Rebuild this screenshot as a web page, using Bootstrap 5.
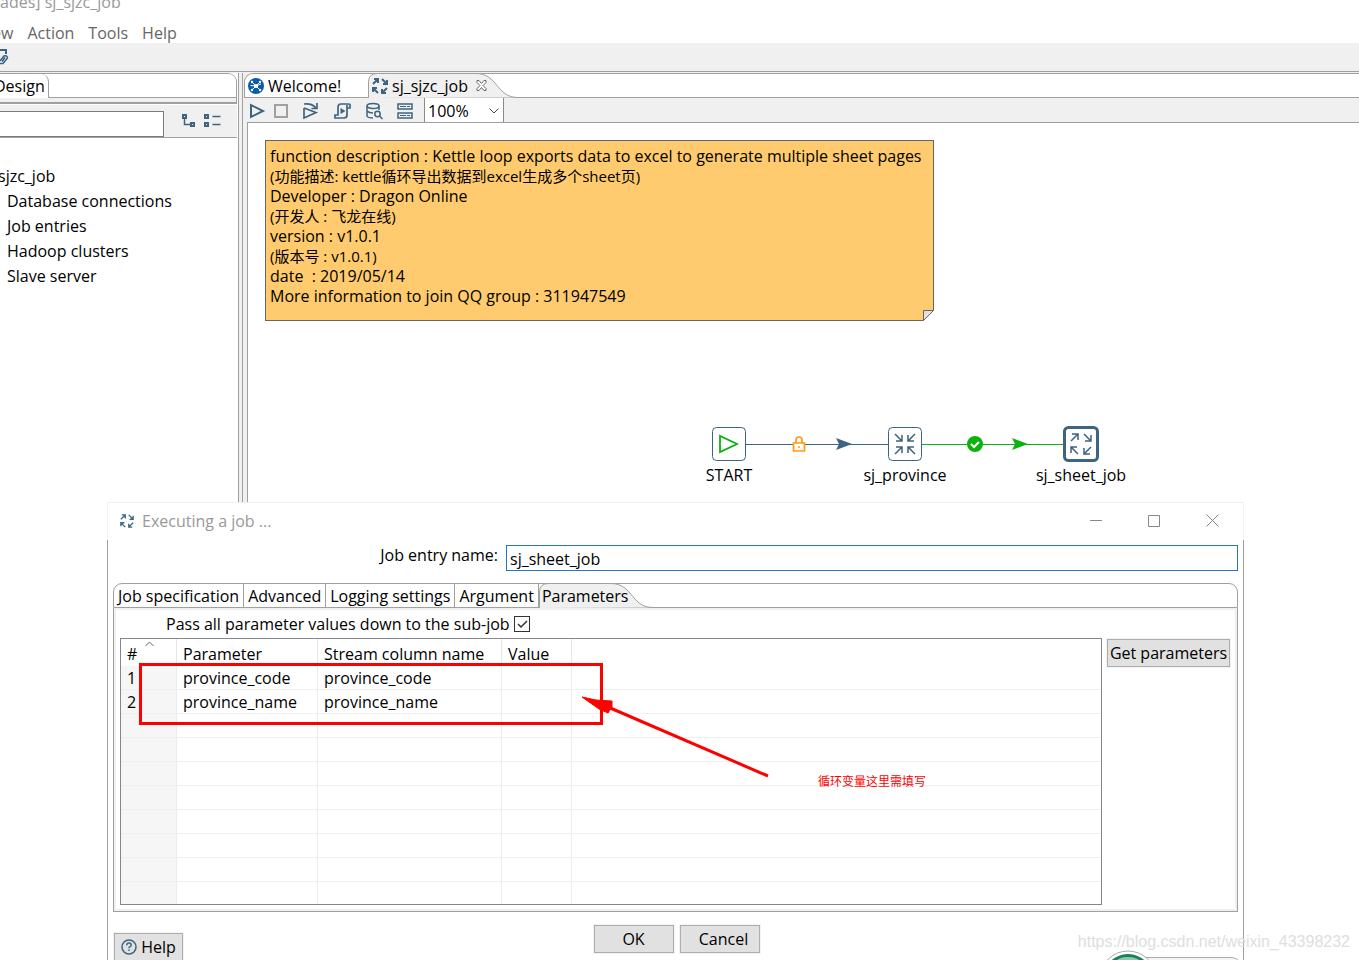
<!DOCTYPE html>
<html lang="en">
<head>
<meta charset="utf-8">
<meta name="viewport" content="width=device-width, initial-scale=1">
<title>sj_sjzc_job</title>
<link href="https://cdn.jsdelivr.net/npm/bootstrap@5.3.0/dist/css/bootstrap.min.css" rel="stylesheet">
<style>
:root { --edge: #a0a0a0; --panel: #f0f0f0; --ink: #3d6480; --go: #0cb310; }
body { font: 16px/20px "Open Sans", "Noto Sans CJK SC", sans-serif; color: #000; background: #fff; }
svg { display: block; flex: none; }
.ink { stroke: var(--ink); fill: none; stroke-width: 2; }
.title-row { height: 22px; color: #999; }
.title-row span { margin: -8px 0 0 -4px; }
.menu-row { height: 21px; color: #666; gap: 14px; }
.menu-row a { color: inherit; text-decoration: none; }
.menu-row a:first-child { margin-left: -8px; }
.tool-row { height: 28px; background: var(--panel); }
.split { background: var(--panel); border-top: 1px solid var(--edge); padding-top: 1px; gap: 3px; }
.side { width: 239px; border-right: 1px solid var(--edge); background: #fff; }
.work { border-left: 1px solid var(--edge); padding-left: 1px; }
.side-tabs { height: 31px; margin-right: 1px; border: solid var(--edge); border-width: 1px 1px 2px 0; border-top-right-radius: 9px; background: var(--panel); overflow: hidden; }
.side-tabs > div { height: 24px; background: #fff; border-bottom: 1px solid var(--edge); }
.side-tabs button { height: 24px; border: 0; border-right: 1px solid var(--edge); border-top-right-radius: 8px; background: #fff; padding: 0 3px 0 0; margin-left: -6px; }
.finder { height: 33px; margin: 1px 1px 0 0; background: var(--panel); border-bottom: 1px solid var(--edge); }
.finder input { width: 164px; height: 26px; margin-top: 6px; border: 1px solid #7a7a7a; border-left: 0; background: #fff; }
.tree { padding: 26px 0 0; line-height: 25px; }
.tree > div { margin-left: -2px; }
.tree ul { padding-left: 7px; }
.strip { height: 25px; background: #fff; border: 1px solid var(--edge); border-right: 0; border-radius: 9px 0 0 0; }
.strip button, .plain { border: 0; background: none; padding: 0; color: inherit; }
.strip .on { position: relative; height: 25px; margin-top: -1px; white-space: nowrap; }
.strip .on > * { position: relative; }
.strip .on > .curve { position: absolute; left: 0; top: 0; }
.welcome { width: 123px; }
.canvas-bar { height: 24px; background: var(--panel); padding-left: 5px; }
.canvas-bar > .plain { padding-top: 2px; }
.gap-tool { margin-left: 14px; }
.zoomer { width: 80px; height: 24px; margin-left: 11px; border: 1px solid #8a8a8a; border-width: 0 1px; background: #fff; }
.zoomer select { appearance: none; border: 0; background: none; width: 78px; height: 24px; padding: 1px 0 0 3px; line-height: 20px; }
.zoomer svg { position: absolute; right: 4px; top: 10px; pointer-events: none; }
.stage { margin-left: 3px; border: solid var(--edge); border-width: 1px 0 0 1px; background: #fff; }
.frame { background: var(--panel); }
.memo { position: absolute; left: 17px; top: 17px; width: 669px; height: 181px; padding: 5px 4px; background: #ffcb6e; border: 1px solid #666; }
.memo p { margin: 0; height: 20px; white-space: pre; }
.memo p:lang(zh) { font-size: 15px; }
.memo svg { position: absolute; right: -1px; bottom: -1px; }
.node { position: absolute; top: 303px; width: 122px; text-align: center; }
.node svg { margin: 0 auto 3px; }
.wire { position: absolute; top: 310px; left: 498px; }
.dialog-win { position: absolute; left: 107px; right: 115px; top: 502px; bottom: 0; background: #fff; overflow: hidden; }
.dlg-title { height: 38px; padding: 0 24px 2px 12px; color: #999; background: #fff; border: 1px solid var(--panel); border-bottom: 0; }
.knobs { gap: 46px; }
.dlg-body { border: solid var(--edge); border-width: 0 1px; padding: 5px 5px 0; flex: 1 0 auto; }
.name-row { gap: 8px; }
.name-row label { width: 385px; text-align: right; }
.name-row input { height: 26px; border: 1px solid #2675bf; padding: 1px 3px 0; min-width: 0; outline: 0; }
.book { margin-top: 12px; }
.book .strip { border-right: 1px solid var(--edge); border-radius: 9px 9px 0 0; }
.book .strip button:not(.on) { border-right: 1px solid var(--edge); padding: 1px 4px 0; white-space: nowrap; }
.book .strip button:not(.on) + button:not(.on) { border-top-left-radius: 8px; }
.sheet { border: 1px solid var(--edge); border-top: 0; }
.sheet-in { border: 2px solid var(--panel); padding: 5px 5px 4px 4px; }
.pass { padding-left: 46px; gap: 4px; height: 23px; }
.pass label { margin-top: -1px; }
.pass input { appearance: none; width: 16px; height: 16px; border: 1px solid #333; margin: 1px 0 0; background: #fff; }
.pass svg { position: absolute; left: 3px; top: 5px; pointer-events: none; }
.gridbox { height: 267px; overflow: hidden; border: 1px solid #828790; min-width: 0; }
.ptable { width: 100%; table-layout: fixed; border-collapse: separate; border-spacing: 0; }
.ptable th { font-weight: 400; height: 27px; padding: 2px 0 0 6px; border-right: 1px solid #e5e5e5; }
.ptable td { height: 24px; padding: 0 0 0 6px; border: solid #e8edf5; border-width: 0 1px 1px 0; border-bottom-color: #f0f0f0; }
.ptable tr > :last-child { border-right: 0; }
.ptable td:first-child { background: #f6f6f6; }
.sorter { position: absolute; left: 24px; top: 2px; }
.marker { position: absolute; left: 18px; top: 24px; width: 464px; height: 62px; border: 3px solid #f00; }
.arrow { position: absolute; left: 460px; top: 55px; }
.hint { position: absolute; left: 697px; top: 133px; font-size: 12px; color: #f00; }
.push { height: 28px; border: 1px solid #adadad; background: #e1e1e1; padding: 0; color: #000; white-space: nowrap; flex: none; box-shadow: 0 0 0 1px #f3f3f3; }
.get { width: 123px; margin: 1px 0 0 5px; }
.foot { padding: 13px 0 0 2px; gap: 6px; }
.w80 { width: 80px; }
.helper { left: 1px; top: 21px; width: 69px; }
.watermark { position: absolute; right: 9px; bottom: 8px; font: 16px/20px "Liberation Sans", sans-serif; color: #dedede; text-decoration: none; }
.ime { position: absolute; right: 118px; bottom: 0; }
</style>
</head>
<body>
<div class="vh-100 d-flex flex-column position-relative overflow-hidden">
  <header>
    <div class="title-row d-flex overflow-hidden"><span>lades] sj_sjzc_job</span></div>
    <nav class="menu-row d-flex align-items-center"><a href="#">ew</a><a href="#">Action</a><a href="#">Tools</a><a href="#">Help</a></nav>
    <div class="tool-row d-flex align-items-center">
      <button class="plain" aria-label="Edit"><svg width="10" height="18" viewBox="0 0 10 18"><path class="ink" d="M0 2h6v4"/><path class="ink" style="stroke-width:1.500" d="M0 13l4-5q3-1 3.500 2L3 15.500H0M2 13.500l3-4"/></svg></button>
    </div>
  </header>
  <div class="split d-flex flex-grow-1">
    <aside class="side flex-shrink-0">
      <div class="side-tabs"><div><button>Design</button></div></div>
      <div class="finder d-flex">
        <input type="text" aria-label="Search">
        <button class="plain ms-3" aria-label="Expand all"><svg width="16" height="16" viewBox="0 0 16 16"><path class="ink" d="M3 2h3v3H3zM11 10h3v3h-3z"/><path class="ink" style="stroke-width:1.500" d="M4.500 6v5.500H10"/></svg></button>
        <button class="plain ms-2" aria-label="Collapse all"><svg width="18" height="16" viewBox="0 0 18 16"><path class="ink" d="M1 2h3v3H1zM1 10h3v3H1z"/><path class="ink" style="stroke-width:1.500" d="M8.500 3.500h8M8.500 11.500h8"/></svg></button>
      </div>
      <div class="tree"><div>sjzc_job</div>
        <ul class="list-unstyled mb-0"><li>Database connections</li><li>Job entries</li><li>Hadoop clusters</li><li>Slave server</li></ul>
      </div>
    </aside>
    <main class="work flex-grow-1">
      <div class="strip d-flex">
        <button class="welcome d-flex align-items-center gap-1 ps-1"><svg style="margin-left:-1px" width="16" height="16" viewBox="0 0 16 16"><circle cx="8" cy="8" r="8" fill="#0a5ca8"/><path d="M4 4l8 8M12 4l-8 8M2.500 7.500L8 8l5-2" stroke="#fff"/><circle cx="8" cy="8" r="2" fill="#fff"/><g fill="#fff"><circle cx="4" cy="4" r="1.200"/><circle cx="12" cy="4" r="1.200"/><circle cx="4" cy="12" r="1.200"/><circle cx="12" cy="12" r="1.200"/></g></svg>Welcome!</button>
        <button class="on d-flex align-items-center gap-1 ps-1">
          <svg class="curve" width="154" height="25"><path d="M.5 25V9Q.5.5 9.500.5H108C130 .5 128 24.500 150 24.500" fill="#f0f0f0" stroke="#a0a0a0"/></svg>
          <svg width="16" height="16" viewBox="0 0 16 16"><path class="ink" d="M1 6l5-5M2 1h4v4M10 1l5 5M15 2v4h-4M15 10l-5 5M14 15h-4v-4M6 15l-5-5M1 14v-4h4"/></svg><span>sj_sjzc_job</span>
          <svg class="ms-1" width="11" height="11" viewBox="0 0 11 11"><path d="M1 .5h2l2.500 3 2.500-3h2v2l-3 3 3 3v2H8l-2.500-3-2.500 3H1v-2l3-3-3-3z" fill="#fff" stroke="#666"/></svg>
        </button>
      </div>
      <div class="frame">
        <div class="canvas-bar d-flex align-items-center">
          <button class="plain" aria-label="Run"><svg width="18" height="18" viewBox="0 0 18 18"><path class="ink" d="M2 3v12l12-6z"/></svg></button>
          <button class="plain" style="margin-left:7px" aria-label="Stop"><svg width="14" height="14" viewBox="0 0 14 14"><path d="M1 1h12v12H1z" fill="none" stroke="#a0a0a0" stroke-width="2"/></svg></button>
          <button class="plain gap-tool" aria-label="Replay"><svg width="18" height="18" viewBox="0 0 18 18"><path class="ink" style="stroke-width:1.700" d="M2 6v10l12-5.500L2 6M2 2q8-1 12 4M15 1v5.500H9.500"/></svg></button>
          <button class="plain gap-tool" aria-label="Script"><svg width="18" height="18" viewBox="0 0 18 18"><path class="ink" style="stroke-width:1.700" d="M13 6h3V3q0-1-2-1H7Q4 2 4 5v8H1v3h9q3 0 3-3V3"/><path d="M6.500 6v6l5-3z" fill="#3d6480"/></svg></button>
          <button class="plain gap-tool" aria-label="Explore database"><svg width="17" height="18" viewBox="0 0 17 18"><g class="ink" style="stroke-width:1.500"><ellipse cx="7" cy="4" rx="6" ry="2.500"/><path d="M1 4v10q1 2 6 2M13 4v4M1 9q2 2 6 2"/><circle cx="11.500" cy="12" r="2.700"/><path d="M13.500 14l3 3"/></g></svg></button>
          <button class="plain gap-tool" aria-label="Layout"><svg width="16" height="16" viewBox="0 0 16 16"><path class="ink" style="stroke-width:1.500" d="M1 1h14v5H1zM1 10h14v5H1z"/><path d="M3 3.500h6M10 3.500h3M3 12.500h6M10 12.500h3" stroke="#3d6480"/></svg></button>
          <div class="zoomer position-relative"><select aria-label="Zoom"><option>100%</option></select><svg width="10" height="6"><path d="M.5.5L5 5 9.500.5" fill="none" stroke="#444"/></svg></div>
        </div>
        <div class="stage vh-100 position-relative">
          <div class="memo">
            <p>function description : Kettle loop exports data to excel to generate multiple sheet pages</p>
            <p lang="zh">(功能描述: kettle循环导出数据到excel生成多个sheet页)</p>
            <p>Developer : Dragon Online</p>
            <p lang="zh">(开发人 : 飞龙在线)</p>
            <p>version : v1.0.1</p>
            <p lang="zh">(版本号 : v1.0.1)</p>
            <p>date  : 2019/05/14</p>
            <p>More information to join QQ group : 311947549</p>
            <svg width="11" height="11"><path d="M0 11L11 0v11z" fill="#fff"/><path d="M.5 10.500V.5h10z" fill="#e0e0e0" stroke="#666"/></svg>
          </div>
          <svg class="wire" width="318" height="22" viewBox="0 0 318 22"><path d="M0 11.500h142" stroke="#3d6480"/><path d="M176 11.500h142" stroke="#0cb310"/><path d="M90 5l16 6-16 6 3-6z" fill="#3d6480"/><path d="M266 5l16 6-16 6 3-6z" fill="#0cb310"/><path d="M47.500 10h11v8h-11zM50 10V7q0-3 3-3t3 3v3" fill="#fff" stroke="#ff9b0e" stroke-width="1.700"/><circle cx="53" cy="14" r="1" fill="#ff9b0e"/><circle cx="229" cy="11" r="8" fill="#0cb310"/><path d="M225 11l3 3 5-5" fill="none" stroke="#fff" stroke-width="2"/></svg>
          <div class="node" style="left:420px"><svg width="36" height="36"><rect x="1.500" y="1.500" width="33" height="33" rx="4" fill="#fff" stroke="#3d6480"/><path d="M9 10v16l17-8z" fill="none" stroke="#0cb310" stroke-width="1.800"/></svg>START</div>
          <div class="node" style="left:596px"><svg width="36" height="36"><rect x="1.500" y="1.500" width="33" height="33" rx="4" fill="#fff" stroke="#3d6480"/><path class="ink" style="stroke-width:1.500" d="M8 8l7 7M15 9v6H9M28 8l-7 7M21 9v6h6M8 28l7-7M9 21h6v6M28 28l-7-7M27 21h-6v6"/></svg>sj_province</div>
          <div class="node" style="left:772px"><svg width="36" height="36"><rect x="1.500" y="1.500" width="33" height="33" rx="4" fill="#fff" stroke="#3d6480" stroke-width="3"/><path class="ink" style="stroke-width:1.500" d="M8 15l7-7M9 8h6v6M21 8l7 7M28 9v6h-6M28 21l-7 7M27 28h-6v-6M15 28l-7-7M8 27v-6h6"/></svg>sj_sheet_job</div>
        </div>
      </div>
    </main>
  </div>

  <section class="dialog-win d-flex flex-column" role="dialog" aria-label="Executing a job">
    <div class="dlg-title d-flex align-items-center">
      <svg class="me-2" width="14" height="14" viewBox="0 0 16 16"><path class="ink" style="stroke-width:1.500" d="M1 6l5-5M2 1h4v4M10 1l5 5M15 2v4h-4M15 10l-5 5M14 15h-4v-4M6 15l-5-5M1 14v-4h4"/></svg>Executing a job ...
      <div class="knobs d-flex ms-auto">
        <button class="plain" aria-label="Minimize"><svg width="12" height="12"><path d="M0 5.500h12" stroke="#888"/></svg></button>
        <button class="plain" aria-label="Maximize"><svg width="12" height="12"><path d="M.5.5h11v11H.5z" fill="none" stroke="#888"/></svg></button>
        <button class="plain" aria-label="Close"><svg width="13" height="13"><path d="M.5.5l12 12M12.500.5l-12 12" stroke="#888"/></svg></button>
      </div>
    </div>
    <div class="dlg-body">
      <div class="name-row d-flex"><label for="jobname">Job entry name:</label><input id="jobname" class="flex-grow-1" type="text" value="sj_sheet_job"></div>
      <div class="book">
        <div class="strip d-flex">
          <button class="ps-1">Job specification</button><button>Advanced</button><button>Logging settings</button><button>Argument</button>
          <button class="on" style="padding-left:3px"><svg class="curve" width="118" height="25"><path d="M.5 25V9Q.5.5 9.500.5H72C94 .5 92 24.500 114 24.500" fill="#f0f0f0" stroke="#a0a0a0"/></svg><span>Parameters</span></button>
        </div>
        <div class="sheet"><div class="sheet-in">
          <div class="pass d-flex"><label for="passall">Pass all parameter values down to the sub-job</label><span class="position-relative"><input id="passall" class="d-block" type="checkbox" checked><svg width="11" height="9"><path d="M1 4l3 3 6-6" fill="none" stroke="#333" stroke-width="1.500"/></svg></span></div>
          <div class="d-flex align-items-start">
            <div class="gridbox flex-grow-1 position-relative">
              <table class="ptable">
                <colgroup><col style="width:56px"><col style="width:141px"><col style="width:184px"><col style="width:70px"><col></colgroup>
                <thead><tr><th>#</th><th>Parameter</th><th>Stream column name</th><th>Value</th><th></th></tr></thead>
                <tbody>
                  <tr><td>1</td><td>province_code</td><td>province_code</td><td></td><td></td></tr>
                  <tr><td>2</td><td>province_name</td><td>province_name</td><td></td><td></td></tr>
                  <tr><td></td><td></td><td></td><td></td><td></td></tr>
                  <tr><td></td><td></td><td></td><td></td><td></td></tr>
                  <tr><td></td><td></td><td></td><td></td><td></td></tr>
                  <tr><td></td><td></td><td></td><td></td><td></td></tr>
                  <tr><td></td><td></td><td></td><td></td><td></td></tr>
                  <tr><td></td><td></td><td></td><td></td><td></td></tr>
                  <tr><td></td><td></td><td></td><td></td><td></td></tr>
                  <tr><td></td><td></td><td></td><td></td><td></td></tr>
                </tbody>
              </table>
              <svg class="sorter" width="9" height="6"><path d="M.5 5L4.500 1 8.500 5" fill="none" stroke="#666"/></svg>
              <div class="marker"></div>
              <svg class="arrow" width="190" height="86" viewBox="0 0 190 86"><path d="M20 10L187 82" stroke="#f00" stroke-width="3"/><path d="M1 3l14 3 16 1v6l-4 6-9-4z" fill="#f00" stroke="#f00"/></svg>
              <div class="hint">循环变量这里需填写</div>
            </div>
            <button class="push get">Get parameters</button>
          </div>
        </div></div>
      </div>
      <div class="foot position-relative d-flex justify-content-center">
        <button class="push helper position-absolute d-flex align-items-center justify-content-center gap-1"><svg width="16" height="16" viewBox="0 0 16 16"><circle cx="8" cy="8" r="7" class="ink" style="stroke-width:1.500"/><path d="M5.800 6.200q0-2.200 2.200-2.200t2.200 2q0 1-1.200 1.600-1 .6-1 1.700M8 10.500v1.500" fill="none" stroke="#3d6480" stroke-width="1.500"/></svg>Help</button>
        <button class="push w80">OK</button><button class="push w80 ps-2">Cancel</button>
      </div>
    </div>
  </section>
  <svg class="ime" width="140" height="10" viewBox="0 0 140 10"><path d="M36 10V7.500h94q6 0 9 5V10" fill="#f4f4f4" stroke="#aaa"/><circle cx="27" cy="29" r="28" fill="#fff" stroke="#aaa"/><circle cx="27" cy="29" r="25" fill="#17805a"/><ellipse cx="27" cy="12" rx="12" ry="5" fill="#8cc9a9"/></svg>
  <a class="watermark" href="#">https://blog.csdn.net/weixin_43398232</a>
</div>
<script src="https://cdn.jsdelivr.net/npm/bootstrap@5.3.0/dist/js/bootstrap.bundle.min.js"></script>
</body>
</html>
